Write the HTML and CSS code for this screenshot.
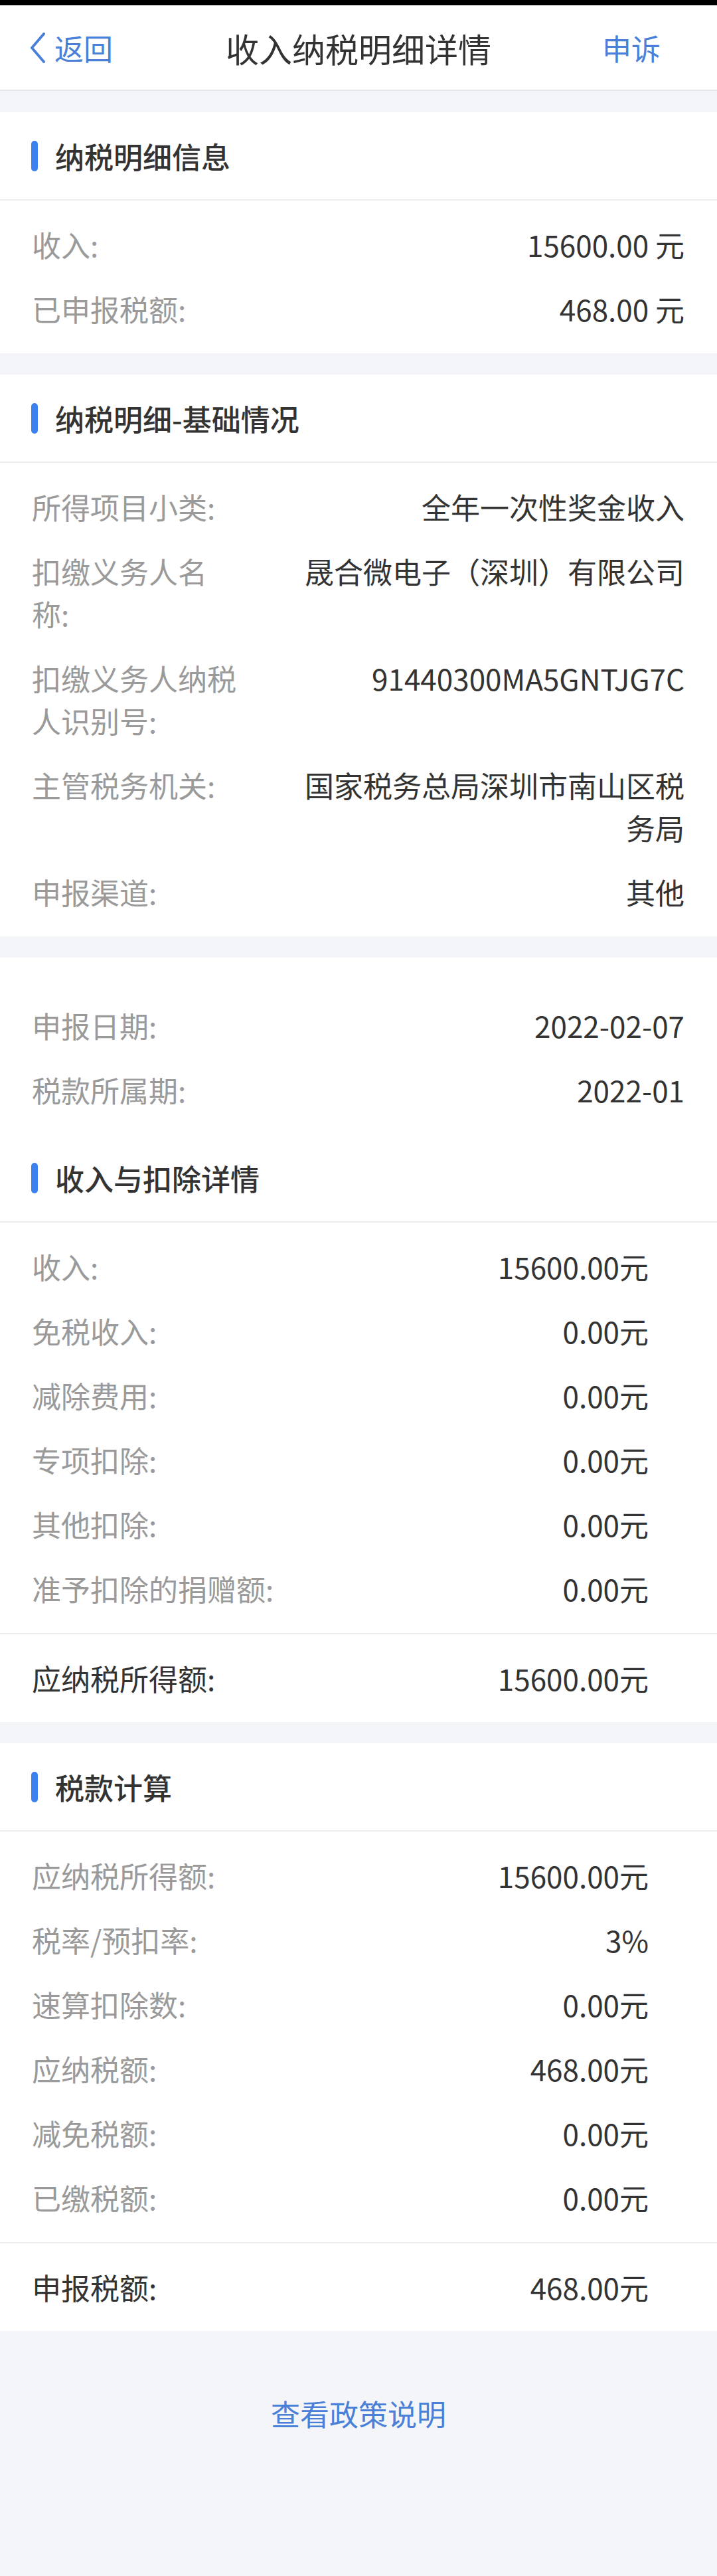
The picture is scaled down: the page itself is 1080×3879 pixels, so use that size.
FILE: index.html
```html
<!DOCTYPE html>
<html lang="zh-CN">
<head>
<meta charset="utf-8">
<title>收入纳税明细详情</title>
<link rel="stylesheet" href="styles.css">
</head>
<body>
<div class="status"></div>
<header class="nav">
  <div class="nav-left">
    <svg class="chev" width="26" height="46" viewBox="0 0 26 46"><path d="M22 2 L4 23 L22 44" fill="none" stroke="#4a80d8" stroke-width="4" stroke-linecap="round" stroke-linejoin="round"/></svg>
    <span class="nav-link">返回</span>
  </div>
  <div class="nav-title">收入纳税明细详情</div>
  <div class="nav-right"><span class="nav-link">申诉</span></div>
</header>

<section class="card">
  <div class="sec-head"><span class="bar"></span><span class="sec-title">纳税明细信息</span></div>
  <div class="list">
    <div class="row"><span class="label">收入:</span><span class="value">15600.00 元</span></div>
    <div class="row"><span class="label">已申报税额:</span><span class="value">468.00 元</span></div>
  </div>
</section>

<section class="card">
  <div class="sec-head"><span class="bar"></span><span class="sec-title">纳税明细-基础情况</span></div>
  <div class="list">
    <div class="row"><span class="label fixed">所得项目小类:</span><span class="value fixed">全年一次性奖金收入</span></div>
    <div class="row"><span class="label fixed">扣缴义务人名称:</span><span class="value fixed">晟合微电子（深圳）有限公司</span></div>
    <div class="row"><span class="label fixed">扣缴义务人纳税人识别号:</span><span class="value fixed">91440300MA5GNTJG7C</span></div>
    <div class="row"><span class="label fixed">主管税务机关:</span><span class="value fixed">国家税务总局深圳市南山区税务局</span></div>
    <div class="row"><span class="label fixed">申报渠道:</span><span class="value fixed">其他</span></div>
  </div>
</section>

<section class="card">
  <div class="list top">
    <div class="row"><span class="label">申报日期:</span><span class="value">2022-02-07</span></div>
    <div class="row"><span class="label">税款所属期:</span><span class="value">2022-01</span></div>
  </div>
  <div class="sec-head"><span class="bar"></span><span class="sec-title">收入与扣除详情</span></div>
  <div class="list inset">
    <div class="row"><span class="label">收入:</span><span class="value">15600.00元</span></div>
    <div class="row"><span class="label">免税收入:</span><span class="value">0.00元</span></div>
    <div class="row"><span class="label">减除费用:</span><span class="value">0.00元</span></div>
    <div class="row"><span class="label">专项扣除:</span><span class="value">0.00元</span></div>
    <div class="row"><span class="label">其他扣除:</span><span class="value">0.00元</span></div>
    <div class="row"><span class="label">准予扣除的捐赠额:</span><span class="value">0.00元</span></div>
  </div>
  <div class="total inset"><span class="label dark">应纳税所得额:</span><span class="value">15600.00元</span></div>
</section>

<section class="card">
  <div class="sec-head"><span class="bar"></span><span class="sec-title">税款计算</span></div>
  <div class="list inset">
    <div class="row"><span class="label">应纳税所得额:</span><span class="value">15600.00元</span></div>
    <div class="row"><span class="label">税率/预扣率:</span><span class="value">3%</span></div>
    <div class="row"><span class="label">速算扣除数:</span><span class="value">0.00元</span></div>
    <div class="row"><span class="label">应纳税额:</span><span class="value">468.00元</span></div>
    <div class="row"><span class="label">减免税额:</span><span class="value">0.00元</span></div>
    <div class="row"><span class="label">已缴税额:</span><span class="value">0.00元</span></div>
  </div>
  <div class="total inset"><span class="label dark">申报税额:</span><span class="value">468.00元</span></div>
</section>

<div class="policy"><span class="policy-link">查看政策说明</span></div>
</body>
</html>
```

FILE: styles.css
```css
html, body {
  margin: 0;
  padding: 0;
}
body {
  width: 1080px;
  min-height: 3879px;
  background: #f4f5f8;
  font-family: "Noto Sans CJK SC", "Noto Sans", sans-serif;
  color: #333333;
  font-size: 44px;
}
.status {
  height: 8px;
  background: #000000;
}
.nav {
  height: 127px;
  background: #ffffff;
  border-bottom: 2px solid #e6e6e8;
  display: grid;
  grid-template-columns: 1fr auto 1fr;
  align-items: center;
}
.nav-left {
  display: flex;
  align-items: center;
  padding-left: 44px;
  gap: 12px;
}
.chev {
  display: block;
}
.nav-link {
  color: #4a80d8;
  font-size: 44px;
  line-height: 60px;
}
.nav-title {
  font-size: 50px;
  line-height: 60px;
  color: #333333;
}
.nav-right {
  display: flex;
  justify-content: flex-end;
  padding-right: 85px;
}
.card {
  background: #ffffff;
  margin-top: 32px;
}
.sec-head {
  height: 131px;
  display: flex;
  align-items: center;
  padding-left: 47px;
  border-bottom: 2px solid #ededed;
  box-sizing: content-box;
}
.bar {
  width: 10px;
  height: 46px;
  border-radius: 5px;
  background: #3b82f0;
  margin-right: 26px;
}
.sec-title {
  font-size: 44px;
  font-weight: 500;
  color: #333333;
  line-height: 64px;
}
.list {
  padding: 18px 49px 18px 48px;
}
.list.top {
  padding-top: 54px;
}
.row {
  display: flex;
  justify-content: space-between;
  align-items: flex-start;
  padding: 16px 0 17px;
  line-height: 64px;
}
.label {
  color: #9a9a9a;
  white-space: nowrap;
}
.label.fixed {
  width: 312px;
  white-space: normal;
}
.label.dark {
  color: #333333;
}
.value {
  color: #333333;
  text-align: right;
  white-space: nowrap;
}
.value.fixed {
  width: 600px;
  white-space: normal;
}
.inset {
  padding-right: 103px;
}
.total {
  display: flex;
  justify-content: space-between;
  align-items: center;
  height: 132px;
  line-height: 64px;
  padding-left: 48px;
  border-top: 2px solid #ededed;
}
.policy {
  text-align: center;
  padding-top: 92px;
  line-height: 64px;
}
.policy-link {
  color: #4a80d8;
  font-size: 44px;
}
```
